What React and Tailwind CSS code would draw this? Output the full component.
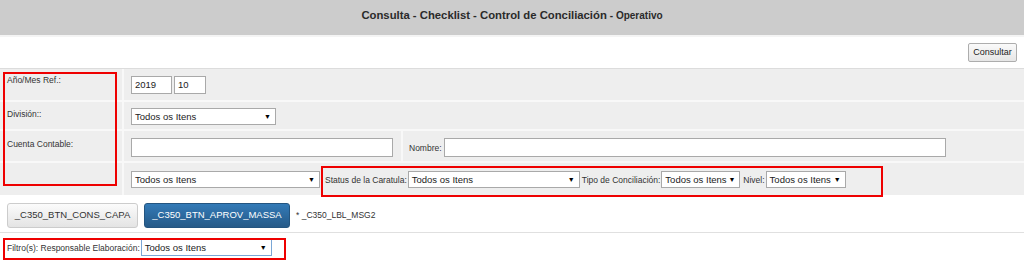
const font = { fontFamily: '"Liberation Sans", Arial, sans-serif' };

function FakeSelect({ className = "", text = "Todos os Itens", focused = false }) {
  return (
    <div
      className={`flex h-[17px] shrink-0 items-center justify-between whitespace-nowrap bg-white pl-[3px] pr-[4px] text-[9.5px] leading-none text-[#222] border ${
        focused ? "border-[#7aa7d6]" : "border-[#a9a9a9]"
      } ${className}`}
    >
      <span>{text}</span>
      <span className="text-[7px] text-black">▼</span>
    </div>
  );
}

function Label({ children, className = "" }) {
  return (
    <span className={`block whitespace-nowrap text-[8.5px] leading-[10px] text-[#333] ${className}`}>
      {children}
    </span>
  );
}

export default function App() {
  return (
    <div className="relative h-[262px] w-[1024px] overflow-hidden bg-white leading-none" style={font}>
      {/* header */}
      <div className="flex h-[37px] items-center justify-center border-b-2 border-[#f4f4f4] bg-[#cccccc] pb-[4px]">
        <span className="text-[11.3px] text-[#2a2a2a]" style={{ fontWeight: 600 }}>
          Consulta - Checklist - Control de Conciliación
        </span>
        <span className="ml-[3px] text-[10px] text-[#2a2a2a]" style={{ fontWeight: 600 }}>
          - Operativo
        </span>
      </div>

      {/* toolbar */}
      <div className="flex h-[32px] items-center justify-end border-b border-[#dcdcdc] pr-[7px]">
        <button className="h-[19px] w-[49px] rounded-[2px] border border-[#adadad] bg-gradient-to-b from-[#fafafa] to-[#e6e6e6] text-[9px] leading-none text-[#222]">
          Consultar
        </button>
      </div>

      {/* form table */}
      <div className="bg-[#eeeeee]">
        <div className="grid h-[33px] grid-cols-[124px_1fr] border-b-2 border-[#f8f8f8]">
          <div className="border-r-2 border-[#f8f8f8] pl-[7px] pt-[6px]">
            <Label>Año/Mes Ref.:</Label>
          </div>
          <div className="flex items-start gap-[2px] pl-[7px] pt-[7px]">
            <div className="flex h-[18px] w-[41px] items-center border border-[#a9a9a9] bg-white pl-[3px] text-[9.5px] text-[#222]">
              2019
            </div>
            <div className="flex h-[18px] w-[32px] items-center border border-[#a9a9a9] bg-white pl-[3px] text-[9.5px] text-[#222]">
              10
            </div>
          </div>
        </div>

        <div className="grid h-[29px] grid-cols-[124px_1fr] border-b-2 border-[#f8f8f8]">
          <div className="border-r-2 border-[#f8f8f8] pl-[7px] pt-[7px]">
            <Label>División::</Label>
          </div>
          <div className="pl-[7px] pt-[6px]">
            <FakeSelect className="w-[145px]" />
          </div>
        </div>

        <div className="grid h-[32px] grid-cols-[124px_1fr] border-b-2 border-[#f8f8f8]">
          <div className="border-r-2 border-[#f8f8f8] pl-[7px] pt-[8px]">
            <Label>Cuenta Contable:</Label>
          </div>
          <div className="flex">
            <div className="w-[279px] border-r-2 border-[#f8f8f8] pl-[7px] pt-[7px]">
              <div className="h-[19px] w-[262px] border border-[#a9a9a9] bg-white" />
            </div>
            <div className="flex items-start pl-[6px] pt-[7px]">
              <Label className="w-[35px] pt-[5px]">Nombre:</Label>
              <div className="h-[19px] w-[502px] border border-[#a9a9a9] bg-white" />
            </div>
          </div>
        </div>

        <div className="grid h-[32px] grid-cols-[124px_1fr]">
          <div className="border-r-2 border-[#f8f8f8]" />
          <div className="flex items-start pl-[7px] pt-[8px]">
            <FakeSelect className="w-[189px]" />
            <Label className="ml-[5px] pt-[4px]">Status de la Caratula:</Label>
            <FakeSelect className="ml-[1px] w-[172px]" />
            <Label className="ml-[2px] pt-[4px]">Tipo de Conciliación:</Label>
            <FakeSelect className="ml-[1px] w-[79px]" />
            <Label className="ml-[3px] pt-[4px]">Nivel:</Label>
            <FakeSelect className="ml-[1px] w-[80px]" />
          </div>
        </div>
      </div>

      {/* buttons */}
      <div className="flex h-[38px] items-center gap-[6px] border-b border-[#e0e0e0] pl-[7px] pt-[3px]">
        <button className="h-[25px] w-[131px] rounded-[3px] border border-[#cccccc] bg-gradient-to-b from-[#fbfbfb] to-[#e4e4e4] text-[9.5px] leading-none text-[#333]">
          _C350_BTN_CONS_CAPA
        </button>
        <button className="h-[25px] w-[146px] rounded-[3px] border border-[#245580] bg-gradient-to-b from-[#337ab7] to-[#265a88] text-[9.5px] leading-none text-white">
          _C350_BTN_APROV_MASSA
        </button>
        <Label>* _C350_LBL_MSG2</Label>
      </div>

      {/* filter */}
      <div className="flex items-center pl-[7px] pt-[6px]">
        <Label>Filtro(s): Responsable Elaboración:</Label>
        <FakeSelect focused className="ml-[1px] w-[131px]" />
      </div>

      {/* red annotation boxes */}
      <div className="absolute left-[3px] top-[72px] h-[114px] w-[114px] border-2 border-[#ee0000]" />
      <div className="absolute left-[321px] top-[166px] h-[31px] w-[562px] border-2 border-[#ee0000]" />
      <div className="absolute left-[3px] top-[238px] h-[22px] w-[283px] border-2 border-[#ee0000]" />
    </div>
  );
}
